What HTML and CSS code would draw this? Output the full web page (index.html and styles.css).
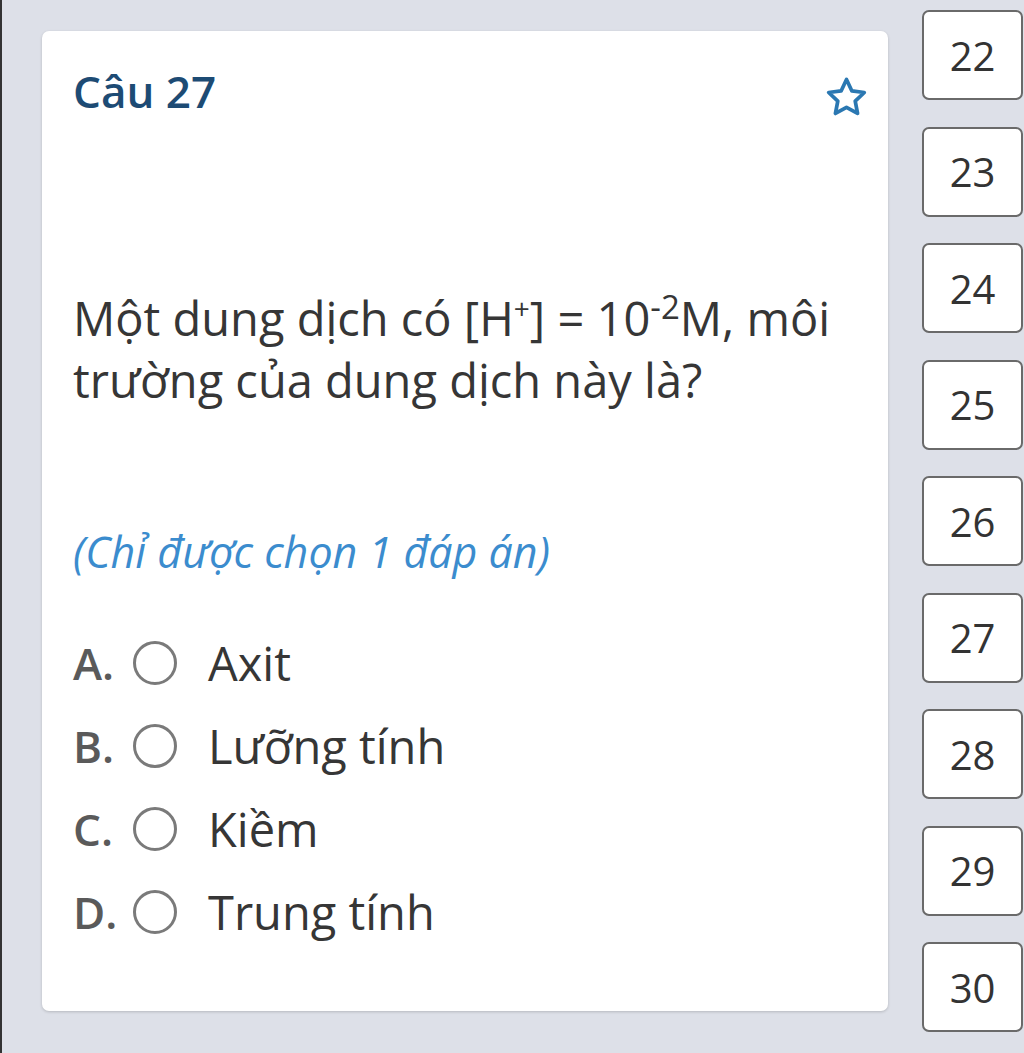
FILE: index.html
```html
<!DOCTYPE html>
<html lang="vi">
<head>
<meta charset="utf-8">
<link rel="stylesheet" href="styles.css">
</head>
<body>
<div class="page">
  <section class="card">
    <div class="card-head">
      <h2 class="title">Câu 27</h2>
      <svg class="star" viewBox="0 0 24 24" width="47" height="47" aria-hidden="true">
        <path d="M12 2.8l2.75 5.85 6.35.8-4.65 4.4 1.2 6.3L12 17.05 6.35 20.15l1.2-6.3L2.9 9.45l6.35-.8z" fill="none" stroke="#2b78b2" stroke-width="1.9" stroke-linejoin="round"/>
      </svg>
    </div>
    <p class="question">Một dung dịch có [H<sup class="sup-plus">+</sup>] = 10<sup class="sup-exp">-2</sup>M, môi trường của dung dịch này là?</p>
    <p class="note">(Chỉ được chọn 1 đáp án)</p>
    <ul class="options">
      <li class="option"><span class="label">A.</span><span class="radio"></span><span class="text">Axit</span></li>
      <li class="option"><span class="label">B.</span><span class="radio"></span><span class="text">Lưỡng tính</span></li>
      <li class="option"><span class="label">C.</span><span class="radio"></span><span class="text">Kiềm</span></li>
      <li class="option"><span class="label">D.</span><span class="radio"></span><span class="text">Trung tính</span></li>
    </ul>
  </section>
  <nav class="nums">
    <div class="num">22</div>
    <div class="num">23</div>
    <div class="num">24</div>
    <div class="num">25</div>
    <div class="num">26</div>
    <div class="num">27</div>
    <div class="num">28</div>
    <div class="num">29</div>
    <div class="num">30</div>
  </nav>
</div>
</body>
</html>
```
FILE: styles.css
```css
html, body {
  margin: 0;
  padding: 0;
}
body {
  background: #dde0e8;
  font-family: "Open Sans", "Noto Sans", sans-serif;
  color: #333;
  width: 1024px;
  height: 1053px;
  overflow: hidden;
  border-left: 2px solid #333;
  box-sizing: border-box;
}
.page {
  display: flex;
  align-items: flex-start;
  padding-left: 40px;
}
.card {
  margin-top: 31px;
  width: 846px;
  height: 980px;
  box-sizing: border-box;
  background: #fff;
  border-radius: 7px;
  box-shadow: 0 1px 3px rgba(0, 0, 0, 0.18);
  padding: 30px 18px 0 31px;
}
.card-head {
  display: flex;
  justify-content: space-between;
  align-items: flex-start;
}
.title {
  margin: 0;
  font-size: 44px;
  font-weight: 600;
  line-height: 60px;
  color: #1d4b74;
}
.star {
  margin-top: 13px;
}
.question {
  margin: 166px 0 0;
  font-size: 47px;
  line-height: 62px;
  color: #363636;
}
.question sup {
  line-height: 0;
}
.sup-plus {
  font-size: 28px;
}
.sup-exp {
  font-size: 33px;
}
.note {
  margin: 113px 0 0;
  font-size: 43px;
  line-height: 56px;
  font-style: italic;
  color: #3b8cce;
}
.options {
  list-style: none;
  margin: 41px 0 0;
  padding: 0;
}
.option {
  display: flex;
  align-items: center;
  height: 83px;
  font-size: 47px;
}
.label {
  width: 60px;
  font-size: 44px;
  font-weight: 600;
  color: #5a5a5a;
}
.radio {
  width: 44px;
  height: 44px;
  box-sizing: border-box;
  border: 3px solid #7a7a7a;
  border-radius: 50%;
  margin-right: 31px;
}
.text {
  color: #363636;
}
.nums {
  margin-left: 34px;
  padding-top: 10px;
  display: flex;
  flex-direction: column;
  gap: 26.5px;
}
.num {
  width: 101px;
  height: 90px;
  box-sizing: border-box;
  border: 2px solid #6a6a6a;
  border-radius: 7px;
  background: #fff;
  display: flex;
  align-items: center;
  justify-content: center;
  font-size: 40px;
  color: #333;
}
```
